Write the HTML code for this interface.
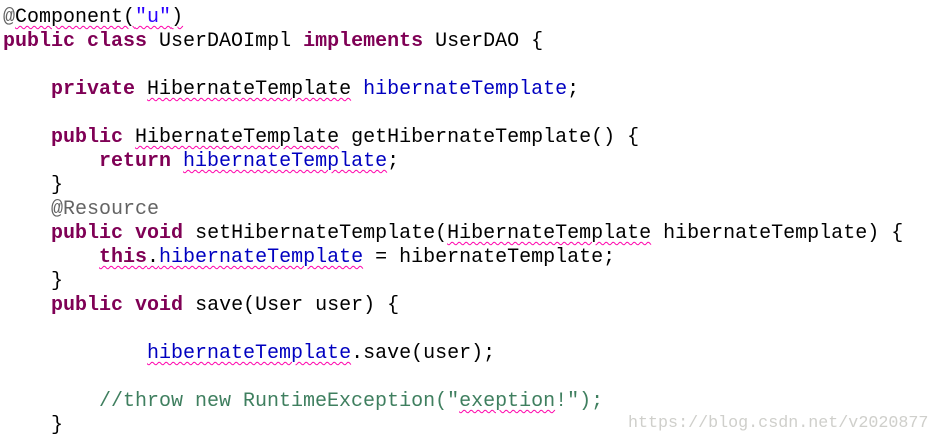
<!DOCTYPE html>
<html><head><meta charset="utf-8"><style>
html,body{margin:0;padding:0;background:#fff;width:941px;height:445px;overflow:hidden}
pre{margin:0;position:absolute;left:3px;top:6px;font-family:"Liberation Mono",monospace;font-size:20px;line-height:24px;color:#000}
.k{color:#7f0055;font-weight:bold}
.f{color:#0000c0}
.s{color:#2a00ff}
.c{color:#3f7f5f}
.a{color:#646464}
.w{text-decoration:underline wavy #f0a;text-decoration-thickness:1px;text-underline-offset:3px}
.wm{position:absolute;left:628px;top:414px;font-family:"Liberation Mono",monospace;font-size:16.7px;color:#cfcfcb}
</style></head><body>
<pre><span class="a">@</span><span class="w">Component(<span class="s">"u"</span>)</span>
<span class="k">public</span> <span class="k">class</span> UserDAOImpl <span class="k">implements</span> UserDAO {

    <span class="k">private</span> <span class="w">HibernateTemplate</span> <span class="f">hibernateTemplate</span>;

    <span class="k">public</span> <span class="w">HibernateTemplate</span> getHibernateTemplate() {
        <span class="k">return</span> <span class="f w">hibernateTemplate</span>;
    }
    <span class="a">@Resource</span>
    <span class="k">public</span> <span class="k">void</span> setHibernateTemplate(<span class="w">HibernateTemplate</span> hibernateTemplate) {
        <span class="w"><span class="k">this</span>.<span class="f">hibernateTemplate</span></span> = hibernateTemplate;
    }
    <span class="k">public</span> <span class="k">void</span> save(User user) {

            <span class="f w">hibernateTemplate</span>.save(user);

        <span class="c">//throw new RuntimeException("<span class="w">exeption</span>!");</span>
    }</pre>
<div class="wm">https://blog.csdn.net/v2020877</div>
</body></html>
